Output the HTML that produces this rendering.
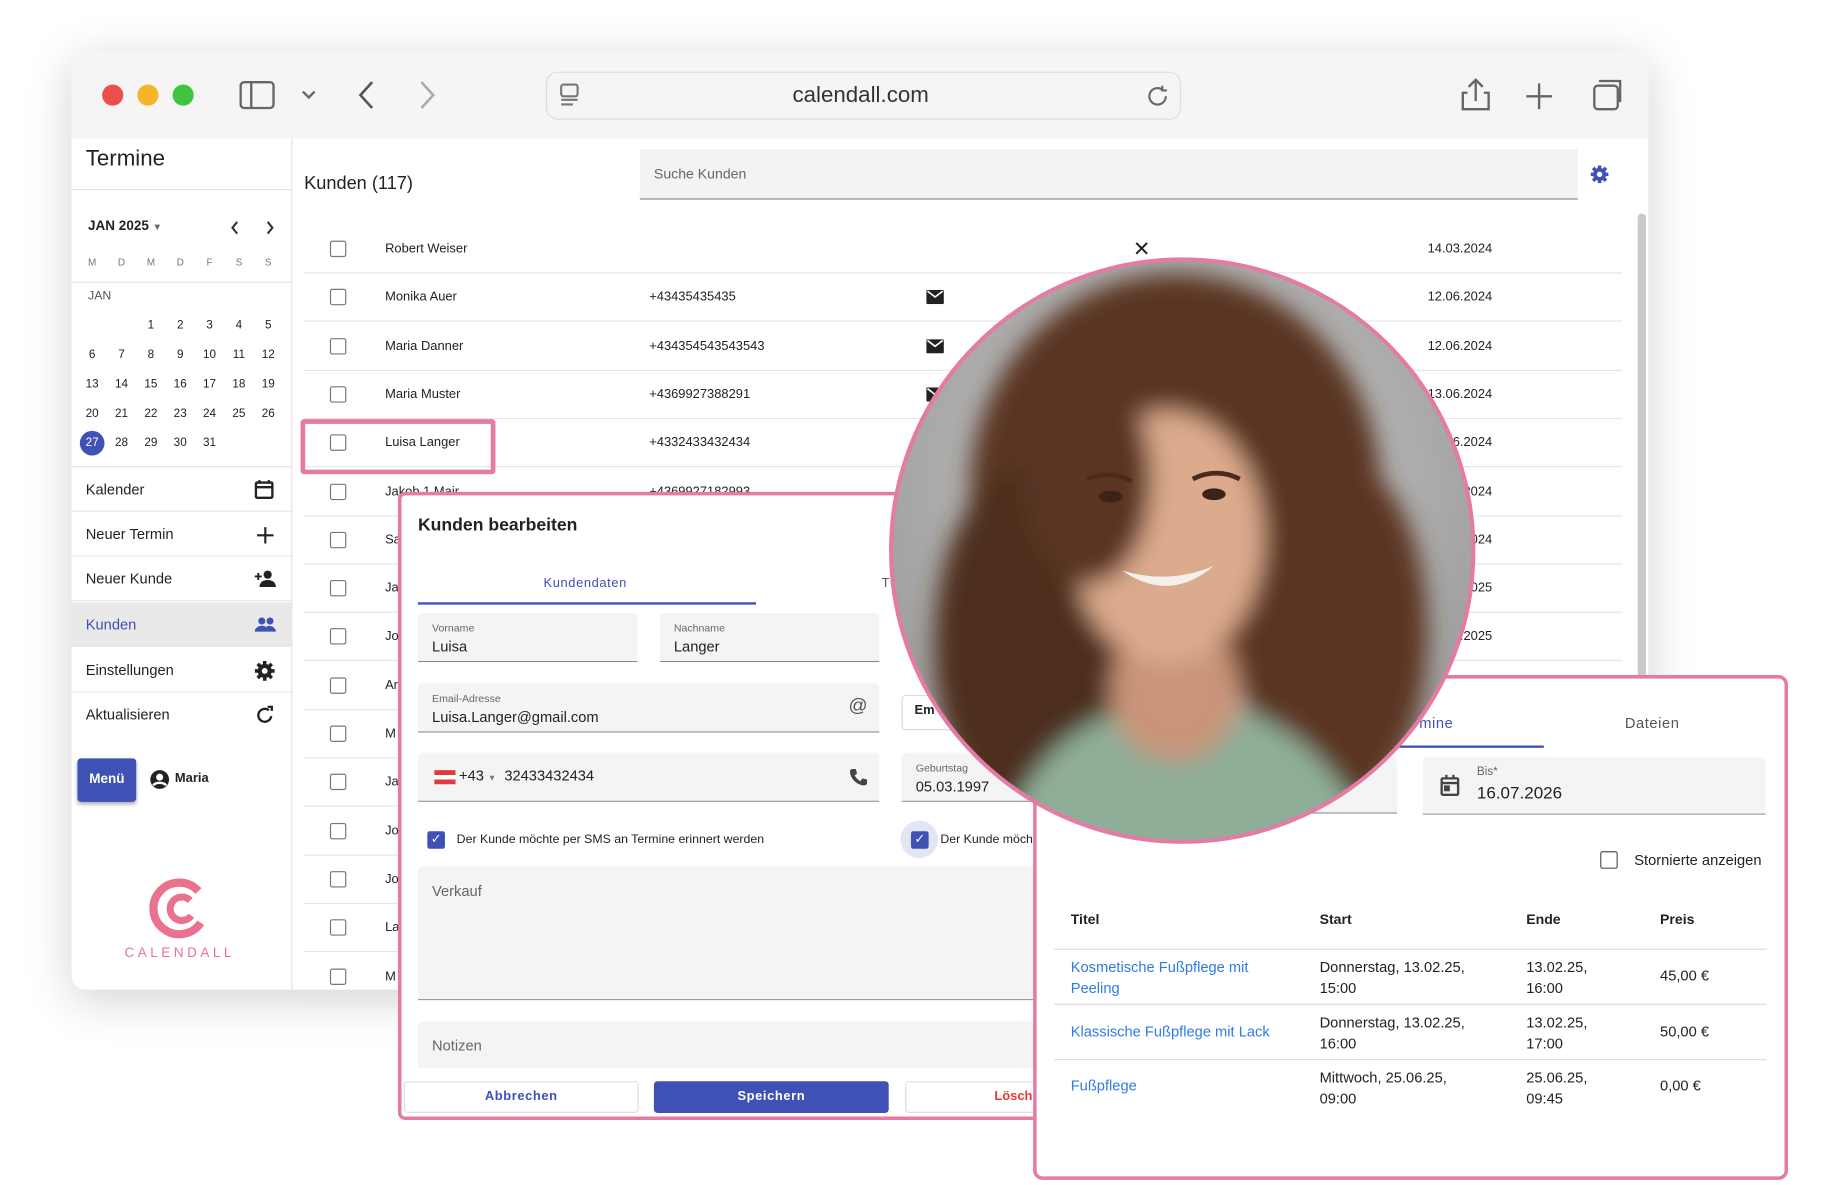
<!DOCTYPE html>
<html><head><meta charset="utf-8"><style>
*{box-sizing:border-box;margin:0;padding:0}
html,body{width:1841px;height:1181px;overflow:hidden;background:#fff;font-family:"Liberation Sans",sans-serif;color:#222}
#w{position:absolute;left:0;top:0;width:1573px;height:1009px;transform:scale(1.174);transform-origin:0 0}
.a{position:absolute}
.t{position:absolute;white-space:nowrap}
.win{left:61px;top:44px;width:1343px;height:799px;border-radius:12px;background:#fff;box-shadow:0 8px 40px rgba(0,0,0,.18);overflow:hidden}
.row{position:absolute;left:259px;width:1123px;height:41px;border-bottom:1px solid #e6e6e6;font-size:11px}
.cb{position:absolute;width:14px;height:14px;border:1.5px solid #777;border-radius:2px;background:#fff}
.fld{position:absolute;background:#f4f4f4;border-bottom:1px solid #8a8a8a;border-radius:4px 4px 0 0}
.lbl{position:absolute;font-size:9px;color:#666;left:12px;top:8px}
.val{position:absolute;font-size:12.5px;color:#222;left:12px;top:22px}
.menu{position:absolute;left:61px;width:187px;height:38px;border-bottom:1px solid #e8e8e8;font-size:12.5px}
.menu span{position:absolute;left:12px;top:12px}
.pink{border:3px solid #e57aa4}
.cal td{width:25px;text-align:center;font-size:10px;height:25px}
</style></head><body><div id="w">
<div class="a win"></div>
<div class="a" style="left:61px;top:44px;width:1343px;height:74px;background:#f6f5f5;border-radius:12px 12px 0 0"></div>
<div class="a" style="left:87px;top:72px;width:18px;height:18px;border-radius:50%;background:#ec4f49"></div>
<div class="a" style="left:117px;top:72px;width:18px;height:18px;border-radius:50%;background:#f5b429"></div>
<div class="a" style="left:147px;top:72px;width:18px;height:18px;border-radius:50%;background:#3ec540"></div>
<svg class="a" style="left:200px;top:66px" width="80" height="30" fill="none" stroke="#666" stroke-width="2"><rect x="5" y="4" width="28" height="22" rx="3"/><line x1="14" y1="4" x2="14" y2="26"/><path d="M58 12l5 5 5-5"/></svg>
<svg class="a" style="left:295px;top:66px" width="90" height="30" fill="none" stroke="#555" stroke-width="2.2"><path d="M22 4L12 15l10 11"/><path d="M64 4l10 11-10 11" stroke="#aaa"/></svg>
<div class="a" style="left:465px;top:61px;width:541px;height:41px;border:1.5px solid #ddd;border-radius:10px;background:#f6f5f5"></div>
<svg class="a" style="left:475px;top:70px" width="24" height="24" fill="none" stroke="#777" stroke-width="1.8"><rect x="3" y="2" width="14" height="10" rx="2"/><path d="M3 15h14M3 19h10"/></svg>
<div class="t" style="left:675px;top:71px;font-size:19px;color:#333">calendall.com</div>
<svg class="a" style="left:975px;top:70px" width="24" height="24" fill="none" stroke="#666" stroke-width="1.8"><path d="M18 12a7 7 0 1 1-3-5.7"/><path d="M15 3v4h4"/></svg>
<svg class="a" style="left:1240px;top:63px" width="150" height="36" fill="none" stroke="#666" stroke-width="2"><path d="M17 5v18M11 11l6-6 6 6M10 16H6v14h22V16h-4"/><path d="M71 8v22M60 19h22"/><rect x="118" y="10" width="20" height="20" rx="3"/><path d="M122 6h18v18"/></svg>
<div class="a" style="left:248px;top:118px;width:1px;height:725px;background:#e3e3e3"></div>
<div class="t" style="left:73px;top:125px;font-size:19px">Termine</div>
<div class="a" style="left:61px;top:161px;width:187px;height:1px;background:#e5e5e5"></div>
<div class="t" style="left:75px;top:187px;font-size:11.5px;font-weight:bold">JAN 2025 <span style="font-size:8px;color:#666">▼</span></div>
<svg class="a" style="left:192px;top:186px" width="50" height="16" fill="none" stroke="#333" stroke-width="1.8"><path d="M10 3l-4 5 4 5M36 3l4 5-4 5"/></svg>
<div class="t" style="left:66px;top:218px;font-size:8.5px;color:#777"><span style="display:inline-block;width:25px;text-align:center">M</span><span style="display:inline-block;width:25px;text-align:center">D</span><span style="display:inline-block;width:25px;text-align:center">M</span><span style="display:inline-block;width:25px;text-align:center">D</span><span style="display:inline-block;width:25px;text-align:center">F</span><span style="display:inline-block;width:25px;text-align:center">S</span><span style="display:inline-block;width:25px;text-align:center">S</span></div>
<div class="a" style="left:61px;top:240px;width:187px;height:1px;background:#e5e5e5"></div>
<div class="t" style="left:75px;top:246px;font-size:10.5px;color:#555">JAN</div>
<table class="a cal" style="left:66px;top:265px;border-collapse:collapse">
<tr><td></td><td></td><td>1</td><td>2</td><td>3</td><td>4</td><td>5</td></tr>
<tr><td>6</td><td>7</td><td>8</td><td>9</td><td>10</td><td>11</td><td>12</td></tr>
<tr><td>13</td><td>14</td><td>15</td><td>16</td><td>17</td><td>18</td><td>19</td></tr>
<tr><td>20</td><td>21</td><td>22</td><td>23</td><td>24</td><td>25</td><td>26</td></tr>
<tr><td><span style="display:inline-block;width:21px;height:21px;line-height:21px;border-radius:50%;background:#3f51b5;color:#fff">27</span></td><td>28</td><td>29</td><td>30</td><td>31</td><td></td><td></td></tr>
</table>
<div class="a" style="left:61px;top:397px;width:187px;height:1px;background:#e5e5e5"></div>
<div class="menu" style="top:398px"><span>Kalender</span><svg class="a" style="left:155px;top:10px" width="18" height="18" fill="none" stroke="#222" stroke-width="2"><rect x="2" y="3" width="14" height="13" rx="1"/><path d="M2 7h14M5 1v3M13 1v3"/></svg></div>
<div class="menu" style="top:436px"><span>Neuer Termin</span><svg class="a" style="left:157px;top:12px" width="16" height="16" stroke="#222" stroke-width="1.8"><path d="M8 1v14M1 8h14"/></svg></div>
<div class="menu" style="top:474px"><span>Neuer Kunde</span><svg class="a" style="left:155px;top:11px" width="20" height="16" fill="#222"><circle cx="12" cy="4.5" r="3.5"/><path d="M5 15c0-4 3-6 7-6s7 2 7 6z"/><path d="M1 6h6M4 3v6" stroke="#222" stroke-width="1.6"/></svg></div>
<div class="menu" style="top:513px;background:#e9e9ea;color:#3f51b5"><span>Kunden</span><svg class="a" style="left:155px;top:12px" width="20" height="14" fill="#3f51b5"><circle cx="7" cy="4" r="3"/><circle cx="14" cy="4" r="3"/><path d="M1 13c0-3 3-5 6-5s6 2 6 5zM10 13c0-2 1-4 2-5 4 0 7 2 7 5z"/></svg></div>
<div class="menu" style="top:552px"><span>Einstellungen</span><svg class="a" style="left:156px;top:11px" width="17" height="17" fill="#222"><circle cx="8.5" cy="8.5" r="6"/><g stroke="#222" stroke-width="3"><path d="M8.5 0v17M0 8.5h17M2.5 2.5l12 12M14.5 2.5l-12 12"/></g><circle cx="8.5" cy="8.5" r="2.5" fill="#fff"/></svg></div>
<div class="menu" style="top:590px;border:none"><span>Aktualisieren</span><svg class="a" style="left:157px;top:11px" width="16" height="16" fill="none" stroke="#222" stroke-width="2"><path d="M13 9a5.5 5.5 0 1 1-2-5"/><path d="M10 1h3.5v3.5"/></svg></div>
<div class="a" style="left:66px;top:646px;width:50px;height:37px;background:#3f51b5;border-radius:3px;color:#fff;font-size:11.5px;font-weight:bold;text-align:center;line-height:37px;box-shadow:0 2px 3px rgba(0,0,0,.3)">Menü</div>
<svg class="a" style="left:127px;top:655px" width="18" height="18"><circle cx="9" cy="9" r="8" fill="#222"/><circle cx="9" cy="7" r="3" fill="#fff"/><path d="M3.5 14c2-3 9-3 11 0" stroke="#fff" stroke-width="2" fill="none"/></svg>
<div class="t" style="left:149px;top:657px;font-size:11px;font-weight:bold">Maria</div>
<svg class="a" style="left:124px;top:744px" width="58" height="58" fill="none" stroke="#e9738f" stroke-width="7"><path d="M45 15a22 22 0 1 0 2 27"/><path d="M38 23a10 10 0 1 0 1 13" stroke-width="6"/></svg>
<div class="t" style="left:106px;top:806px;font-size:11.5px;letter-spacing:3px;color:#e9738f">CALENDALL</div>
<div class="t" style="left:259px;top:148px;font-size:15.5px">Kunden (117)</div>
<div class="a" style="left:545px;top:127px;width:799px;height:43px;background:#f3f3f3;border-bottom:1.5px solid #888"></div>
<div class="t" style="left:557px;top:141px;font-size:12px;color:#666">Suche Kunden</div>
<svg class="a" style="left:1354px;top:140px" width="17" height="17" fill="#3f51b5"><circle cx="8.5" cy="8.5" r="5.5"/><g stroke="#3f51b5" stroke-width="3"><path d="M8.5 1v15M1 8.5h15M3 3l11 11M14 3L3 14"/></g><circle cx="8.5" cy="8.5" r="2.3" fill="#fff"/></svg>
<div class="a" style="left:1395px;top:182px;width:7px;height:400px;background:#c9c9c9;border-radius:3px"></div>
<div id="rows"></div>
<div class="t" style="left:965px;top:202px;font-size:18px">✕</div>
<div class="a pink" style="left:256px;top:357px;width:166px;height:47px;border-radius:3px;border-width:4px"></div>
<div class="a pink" style="left:339px;top:419px;width:570px;height:535px;background:#fff;border-radius:6px"></div>
<div class="t" style="left:356px;top:439px;font-size:15px;font-weight:bold;color:#222">Kunden bearbeiten</div>
<div class="t" style="left:463px;top:491px;font-size:11px;color:#3f51b5;letter-spacing:.5px">Kundendaten</div>
<div class="t" style="left:751px;top:491px;font-size:11px;color:#555">T</div>
<div class="a" style="left:356px;top:513px;width:288px;height:2px;background:#3f51b5"></div>
<div class="fld" style="left:356px;top:522px;width:187px;height:42px"><div class="lbl">Vorname</div><div class="val">Luisa</div></div>
<div class="fld" style="left:562px;top:522px;width:187px;height:42px"><div class="lbl">Nachname</div><div class="val">Langer</div></div>
<div class="fld" style="left:356px;top:582px;width:393px;height:42px"><div class="lbl">Email-Adresse</div><div class="val">Luisa.Langer@gmail.com</div><div class="t" style="right:10px;top:11px;font-size:16px;color:#555">@</div></div>
<div class="fld" style="left:356px;top:641px;width:393px;height:42px"><div class="a" style="left:14px;top:15px;width:18px;height:12px;background:linear-gradient(#e03a3e 33%,#fff 33% 66%,#e03a3e 66%)"></div><div class="t" style="left:35px;top:13px;font-size:12.5px">+43 <span style="font-size:7px;color:#777">▼</span>&nbsp; 32433432434</div><svg class="a" style="left:367px;top:13px" width="16" height="16" fill="#444"><path d="M3 1l3 0 1 4-2 1.5c1 2 3 4 5 5L11.5 9l4 1v3c0 1-1 2-2 2C7 15 1 9 1 3c0-1 1-2 2-2z"/></svg></div>
<div class="a" style="left:768px;top:592px;width:120px;height:30px;border:1px solid #ddd;border-radius:3px;background:#fff"></div>
<div class="t" style="left:779px;top:599px;font-size:11px;font-weight:bold">Em</div>
<div class="fld" style="left:768px;top:641px;width:130px;height:42px"><div class="lbl">Geburtstag</div><div class="val">05.03.1997</div></div>
<div class="a" style="left:364px;top:708px;width:15px;height:15px;background:#3f51b5;border-radius:2px;color:#fff;font-size:11px;text-align:center;line-height:15px">✓</div>
<div class="t" style="left:389px;top:709px;font-size:10.5px">Der Kunde möchte per SMS an Termine erinnert werden</div>
<div class="a" style="left:767px;top:699px;width:32px;height:32px;border-radius:50%;background:#e3e5f3"></div>
<div class="a" style="left:776px;top:708px;width:15px;height:15px;background:#3f51b5;border-radius:2px;color:#fff;font-size:11px;text-align:center;line-height:15px">✓</div>
<div class="t" style="left:801px;top:709px;font-size:10.5px">Der Kunde möch</div>
<div class="fld" style="left:356px;top:738px;width:545px;height:114px"><div class="t" style="left:12px;top:14px;font-size:12.5px;color:#666">Verkauf</div></div>
<div class="fld" style="left:356px;top:870px;width:545px;height:40px;border:none"><div class="t" style="left:12px;top:14px;font-size:12.5px;color:#666">Notizen</div></div>
<div class="a" style="left:344px;top:921px;width:200px;height:27px;border:1px solid #ddd;border-radius:3px;color:#3f51b5;font-size:11px;font-weight:bold;text-align:center;line-height:25px;letter-spacing:.5px">Abbrechen</div>
<div class="a" style="left:557px;top:921px;width:200px;height:27px;background:#3f51b5;border-radius:3px;color:#fff;font-size:11px;font-weight:bold;text-align:center;line-height:27px;letter-spacing:.5px">Speichern</div>
<div class="a" style="left:771px;top:921px;width:130px;height:27px;border:1px solid #ddd;border-radius:3px"></div>
<div class="t" style="left:847px;top:928px;font-size:11px;font-weight:bold;color:#e53935">Lösch</div>
<div class="a pink" style="left:880px;top:575px;width:643px;height:430px;background:#fff;border-radius:8px"></div>
<div class="t" style="left:1190px;top:609px;font-size:12.5px;color:#3f51b5;letter-spacing:.5px">Termine</div>
<div class="a" style="left:1120px;top:635px;width:195px;height:2px;background:#3f51b5"></div>
<div class="t" style="left:1384px;top:609px;font-size:12.5px;color:#555;letter-spacing:.5px">Dateien</div>
<div class="fld" style="left:1000px;top:645px;width:190px;height:48px"></div>
<div class="fld" style="left:1212px;top:645px;width:292px;height:49px"><svg class="a" style="left:14px;top:14px" width="18" height="20" fill="none" stroke="#444" stroke-width="2"><rect x="2" y="4" width="14" height="14" rx="1"/><path d="M2 8h14M6 1v4M12 1v4"/><rect x="5" y="11" width="3" height="3" fill="#444"/></svg><div class="t" style="left:46px;top:7px;font-size:10px;color:#666">Bis*</div><div class="t" style="left:46px;top:23px;font-size:14.5px">16.07.2026</div></div>
<div class="a" style="left:1363px;top:725px;width:15px;height:15px;border:1.8px solid #555;border-radius:2px"></div>
<div class="t" style="left:1392px;top:726px;font-size:12.5px">Stornierte anzeigen</div>
<div class="t" style="left:912px;top:776px;font-size:12px;font-weight:bold">Titel</div>
<div class="t" style="left:1124px;top:776px;font-size:12px;font-weight:bold">Start</div>
<div class="t" style="left:1300px;top:776px;font-size:12px;font-weight:bold">Ende</div>
<div class="t" style="left:1414px;top:776px;font-size:12px;font-weight:bold">Preis</div>
<div class="a" style="left:898px;top:808px;width:607px;height:1px;background:#ddd"></div>
<div class="a" style="left:898px;top:855px;width:607px;height:1px;background:#ddd"></div>
<div class="a" style="left:898px;top:902px;width:607px;height:1px;background:#ddd"></div>
<div class="a" style="left:912px;top:815px;font-size:12.5px;line-height:18px;color:#2f7be0">Kosmetische Fußpflege mit<br>Peeling</div>
<div class="a" style="left:1124px;top:815px;font-size:12.5px;line-height:18px">Donnerstag, 13.02.25,<br>15:00</div>
<div class="a" style="left:1300px;top:815px;font-size:12.5px;line-height:18px">13.02.25,<br>16:00</div>
<div class="t" style="left:1414px;top:824px;font-size:12.5px">45,00 €</div>
<div class="t" style="left:912px;top:872px;font-size:12.5px;color:#2f7be0">Klassische Fußpflege mit Lack</div>
<div class="a" style="left:1124px;top:862px;font-size:12.5px;line-height:18px">Donnerstag, 13.02.25,<br>16:00</div>
<div class="a" style="left:1300px;top:862px;font-size:12.5px;line-height:18px">13.02.25,<br>17:00</div>
<div class="t" style="left:1414px;top:872px;font-size:12.5px">50,00 €</div>
<div class="t" style="left:912px;top:918px;font-size:12.5px;color:#2f7be0">Fußpflege</div>
<div class="a" style="left:1124px;top:909px;font-size:12.5px;line-height:18px">Mittwoch, 25.06.25,<br>09:00</div>
<div class="a" style="left:1300px;top:909px;font-size:12.5px;line-height:18px">25.06.25,<br>09:45</div>
<div class="t" style="left:1414px;top:918px;font-size:12.5px">0,00 €</div>
<svg class="a" style="left:756px;top:218px" width="502" height="502">
<defs><clipPath id="c"><circle cx="251" cy="251" r="248"/></clipPath>
<radialGradient id="bg" cx="50%" cy="40%" r="60%"><stop offset="0" stop-color="#cfcfcf"/><stop offset="1" stop-color="#9b9b9b"/></radialGradient>
<filter id="b"><feGaussianBlur stdDeviation="10"/></filter></defs>
<g clip-path="url(#c)">
<rect width="502" height="502" fill="url(#bg)"/>
<g filter="url(#b)">
<ellipse cx="245" cy="200" rx="175" ry="185" fill="#5a3522"/>
<ellipse cx="120" cy="330" rx="80" ry="150" fill="#4e2d1c"/>
<ellipse cx="380" cy="320" rx="80" ry="150" fill="#5b3521"/>
<path d="M90 520 C120 400 200 380 250 380 S380 400 420 520Z" fill="#8fae98"/>
<ellipse cx="245" cy="370" rx="55" ry="60" fill="#c99478"/>
<ellipse cx="238" cy="240" rx="82" ry="108" fill="#dcaa8c"/>
<ellipse cx="170" cy="190" rx="55" ry="90" fill="#5a3522"/>
</g>
<path d="M200 268 q40 28 78 -4 q-38 16 -78 4z" fill="#f4f1ec"/>
<path d="M170 190 q20 -8 38 2 M260 190 q20 -10 40 0" stroke="#4a2a1a" stroke-width="4" fill="none"/>
<ellipse cx="190" cy="205" rx="10" ry="5" fill="#3a2418"/><ellipse cx="278" cy="203" rx="10" ry="5" fill="#3a2418"/>
</g>
<circle cx="251" cy="251" r="248" fill="none" stroke="#e57aa4" stroke-width="3.5"/>
</svg>
</div>
<script>
var d=[["Robert Weiser","","","14.03.2024"],["Monika Auer","+43435435435",1,"12.06.2024"],["Maria Danner","+434354543543543",1,"12.06.2024"],["Maria Muster","+4369927388291",1,"13.06.2024"],["Luisa Langer","+4332433432434",0,"13.06.2024"],["Jakob 1 Mair","+4369927182993",0,"13.06.2024"],["Sa","",0,"12.06.2024"],["Ja","",0,"13.06.2025"],["Jo","",0,"13.06.2025"],["Ar","",0,""],["M","",0,""],["Ja","",0,""],["Jo","",0,""],["Jo","",0,""],["La","",0,""],["M","",0,""]];
var h="";d.forEach(function(r,i){var y=192+i*41.3;h+='<div class="row" style="top:'+y+'px"><div class="cb" style="left:22px;top:13px"></div><div class="t" style="left:69px;top:14px">'+r[0]+'</div><div class="t" style="left:294px;top:14px">'+r[1]+'</div>'+(r[2]===1?'<svg class="a" style="left:530px;top:14px" width="15" height="12"><rect width="15" height="12" rx="1" fill="#222"/><path d="M1 1l6.5 5 6.5-5" stroke="#fff" stroke-width="1.4" fill="none"/></svg>':'')+'<div class="t" style="left:957px;top:14px">'+r[3]+'</div></div>';});
document.getElementById("rows").outerHTML=h;
</script>
</body></html>
